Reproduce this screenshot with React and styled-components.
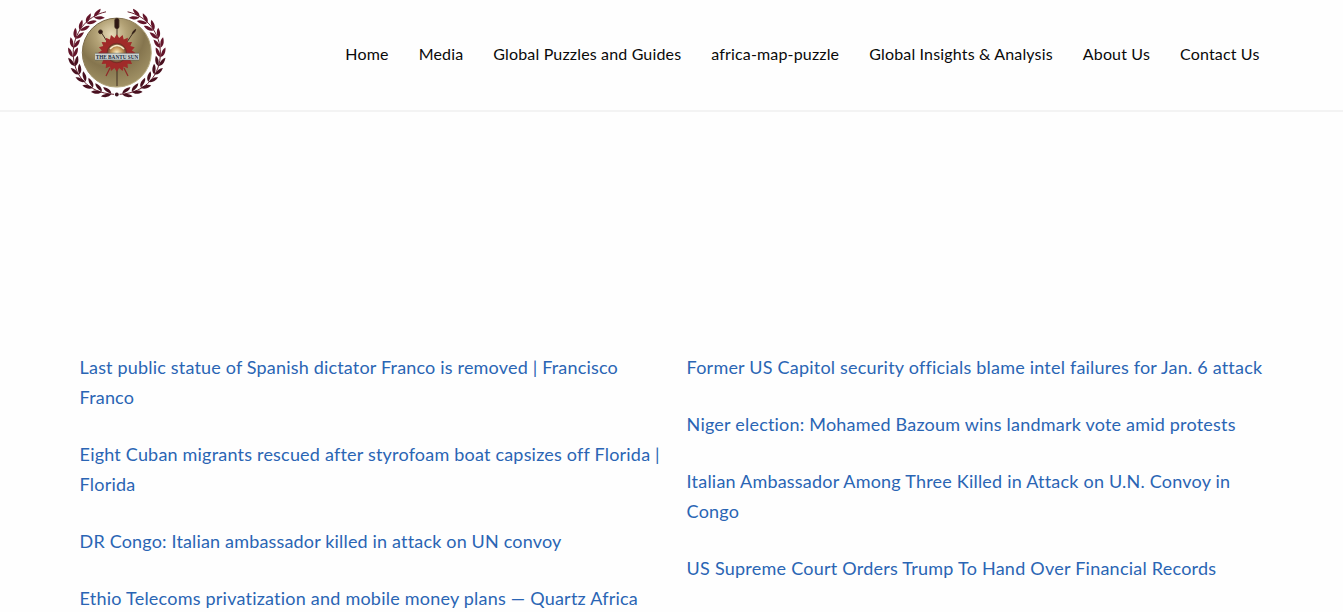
import React from 'react';
import styled, { createGlobalStyle } from 'styled-components';

const GlobalStyle = createGlobalStyle`
  html, body { margin: 0; background: #fefefe; }
  body { font-family: Lato, "Liberation Sans", sans-serif; overflow: hidden; }
  *, *::before, *::after { box-sizing: border-box; }
`;

const Page = styled.div`
  height: 612px;
  overflow: hidden;
`;

const Header = styled.header`
  display: flex;
  align-items: center;
  justify-content: space-between;
  height: 112px;
  padding: 0 83.5px 2px 60px;
  border-bottom: 2px solid #f3f3f3;
`;

const Logo = styled.svg`
  display: block;
  width: 115px;
  height: 110px;
`;

const Nav = styled.nav`
  display: flex;
  gap: 30px;
`;

const NavLink = styled.a`
  color: #0a0a0a;
  font-size: 16px;
  line-height: 24px;
  letter-spacing: 0.16px;
  white-space: nowrap;
  text-decoration: none;
`;

const News = styled.main`
  display: grid;
  grid-template-columns: 583px 583px;
  column-gap: 24px;
  padding: 240px 0 0 79.6px;
`;

const Column = styled.section`
  display: flex;
  flex-direction: column;
  gap: 27px;
`;

const Headline = styled.a`
  color: #2a65b4;
  font-size: 18px;
  line-height: 30px;
  letter-spacing: ${(p) => p.$tracking}px;
  text-decoration: none;
`;

const menu = ['Home', 'Media', 'Global Puzzles and Guides', 'africa-map-puzzle', 'Global Insights & Analysis', 'About Us', 'Contact Us'];

const columns = [
  [
    ['Last public statue of Spanish dictator Franco is removed | Francisco Franco', 0.18],
    ['Eight Cuban migrants rescued after styrofoam boat capsizes off Florida | Florida', 0.2],
    ['DR Congo: Italian ambassador killed in attack on UN convoy', 0.165],
    ['Ethio Telecoms privatization and mobile money plans — Quartz Africa', 0.22],
  ],
  [
    ['Former US Capitol security officials blame intel failures for Jan. 6 attack', 0.21],
    ['Niger election: Mohamed Bazoum wins landmark vote amid protests', 0.205],
    ['Italian Ambassador Among Three Killed in Attack on U.N. Convoy in Congo', 0.21],
    ['US Supreme Court Orders Trump To Hand Over Financial Records', 0.24],
  ],
];

const CX = 56.8;
const CY = 53.7;

// Leaf pairs of the left branch, from the foot of the wreath to its tip.
const leaves = Array.from({ length: 12 }, (_, i) => {
  const degrees = 103 + i * 12.9;
  const a = (degrees * Math.PI) / 180;
  return {
    x: CX + 43.8 * Math.cos(a),
    y: CY + 41.2 * Math.sin(a),
    turn: degrees + 90,
    fill: i < 6 ? '#48101f' : '#63152a',
  };
});

const sun = Array.from({ length: 40 }, (_, i) => {
  const a = (i * Math.PI) / 20;
  const r = i % 2 ? 15.2 : 18.8;
  return `${CX + r * Math.cos(a)},${54 + r * Math.sin(a)}`;
}).join(' ');

const Branch = () => (
  <g>
    <path d="M54 95.3C27 94 13.2 75 13.2 54C13.2 35 26 17 46 12.8" fill="none" stroke="#68202f" strokeWidth="1" />
    {leaves.map((l) => (
      <g key={l.turn} transform={`translate(${l.x} ${l.y}) rotate(${l.turn})`} fill={l.fill}>
        <path d="M-4.5 0C-3.6-3.3-.4-5.2 5-4.9C3.6-2 .4-.5-4.5 0Z" />
        <path d="M-4.5 0C-3.6 3.3-.4 5.2 5 4.9C3.6 2 .4 .5-4.5 0Z" />
      </g>
    ))}
  </g>
);

const Emblem = () => (
  <Logo viewBox="0 0 115 110" role="img" aria-label="The Bantu Sun">
    <defs>
      <radialGradient id="disc" cx="0.42" cy="0.24" r="0.8">
        <stop offset="0" stopColor="#e6dab8" />
        <stop offset="0.28" stopColor="#b3a276" />
        <stop offset="0.6" stopColor="#85754e" />
        <stop offset="1" stopColor="#a59669" />
      </radialGradient>
      <linearGradient id="rim" x1="0" y1="0" x2="1" y2="1">
        <stop offset="0" stopColor="#5e4c30" />
        <stop offset="0.5" stopColor="#a3936a" />
        <stop offset="1" stopColor="#c5b98f" />
      </linearGradient>
      <radialGradient id="core">
        <stop offset="0" stopColor="#fff4cd" />
        <stop offset="0.55" stopColor="#c69959" />
        <stop offset="1" stopColor="#69412e" />
      </radialGradient>
    </defs>
    <Branch />
    <g transform={`translate(${CX * 2} 0) scale(-1 1)`}><Branch /></g>
    <circle cx={CX} cy="95.5" r="1.9" fill="#401622" />
    <circle cx={CX} cy="53.6" r="34.5" fill="url(#disc)" stroke="url(#rim)" strokeWidth="1" />
    <g stroke="#37251b" strokeWidth="0.9" fill="#2e1714">
      <path d="M57 22V42M41 33L48 44M75 31L67 43M57 65V87" />
      <path d="M50 69L46 77M64 69L68 77" stroke="#8f2827" strokeWidth="1.2" />
      <rect x="54.9" y="19.4" width="4" height="10.2" rx="1.8" />
      <circle cx="40.5" cy="32.8" r="1.9" />
      <path d="M72 35L73.5 32L75.8 30.2L74.7 33Z" />
    </g>
    <polygon points={sun} fill="#a02a29" />
    <circle cx="56.8" cy="54" r="9.8" fill="url(#core)" stroke="#722522" strokeWidth="0.7" />
    <path d="M50 50Q57 43 64 50" fill="none" stroke="#f5e9c6" strokeWidth="1.5" />
    <rect x="35" y="54.3" width="44" height="6.7" fill="#ccd2cf" />
    <path d="M35 54.2H79M35 61H79" stroke="#4b5658" strokeWidth="0.5" />
    <text x="57" y="59.9" textAnchor="middle" textLength="42.5" lengthAdjust="spacingAndGlyphs" fontFamily="Liberation Serif, serif" fontWeight="700" fontSize="6.4" fill="#202b3c">THE BANTU SUN</text>
  </Logo>
);

export default function App() {
  return (
    <Page>
      <GlobalStyle />
      <Header>
        <Emblem />
        <Nav>{menu.map((m) => <NavLink key={m}>{m}</NavLink>)}</Nav>
      </Header>
      <News>
        {columns.map((items) => (
          <Column key={items[0][0]}>
            {items.map(([title, tracking]) => (
              <Headline key={title} $tracking={tracking}>{title}</Headline>
            ))}
          </Column>
        ))}
      </News>
    </Page>
  );
}
